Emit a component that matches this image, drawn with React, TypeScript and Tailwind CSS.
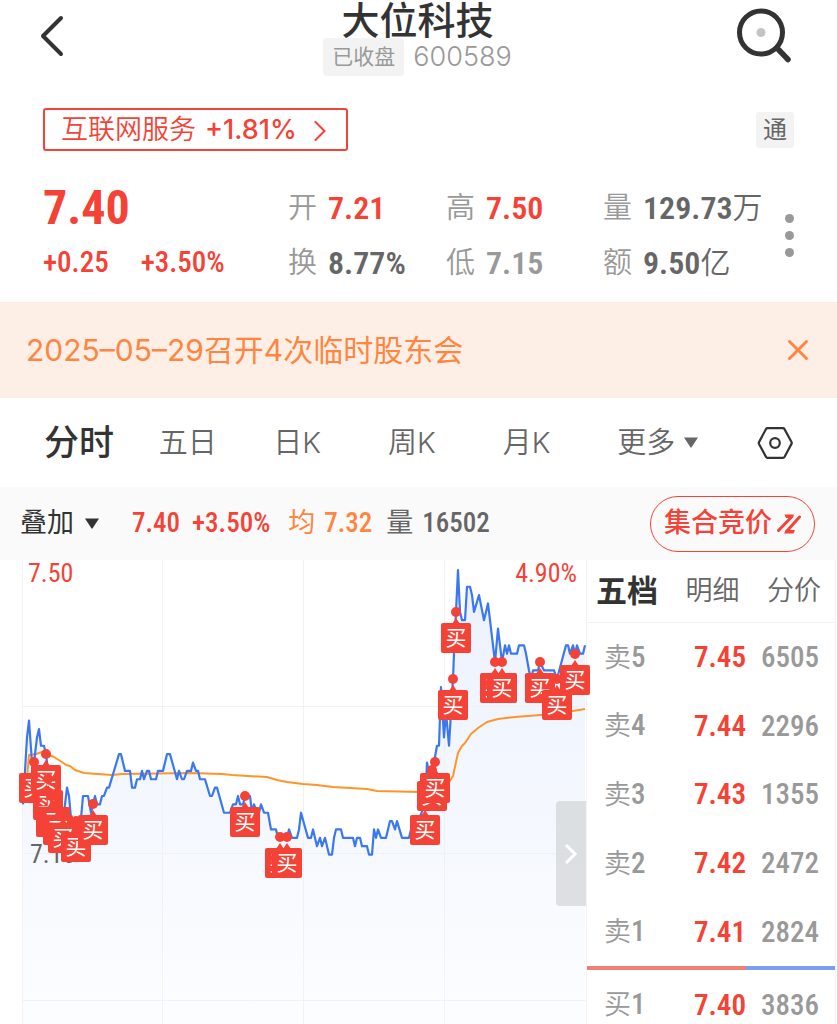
import type { ReactNode } from "react";

const RED = "#f44336";

const sans = "font-['Inter','Noto_Sans_CJK_SC',sans-serif]";
const num = "font-['Roboto_Condensed','Roboto','Noto_Sans_CJK_SC',sans-serif]";

// [x, ticks below the top of the scale], one tick is 0.01
const PRICE: [number, number][] = [
  [23, 28], [27, 20], [29, 18], [32, 23], [34, 23], [37, 20], [39, 19], [41, 21], [44, 21], [46, 22],
  [49, 25], [52, 28], [56, 29], [60, 31], [64, 29], [67, 26], [69, 27], [72, 31], [76, 32], [80, 31],
  [83, 27], [88, 27], [91, 29], [93, 28], [95, 27], [97, 28], [100, 28], [102, 27], [104, 27], [107, 26],
  [109, 26], [119, 22], [121, 22], [125, 24], [130, 24], [132, 26], [135, 26], [137, 25], [140, 25],
  [142, 24], [144, 25], [147, 24], [149, 24], [151, 25], [156, 25], [158, 24], [163, 24], [167, 22],
  [170, 22], [177, 25], [179, 24], [182, 25], [184, 25], [187, 24], [191, 24], [193, 23], [196, 24],
  [198, 24], [200, 25], [205, 25], [210, 27], [212, 27], [215, 26], [217, 26], [224, 29], [230, 29],
  [233, 28], [236, 28], [238, 27], [240, 28], [243, 28], [245, 27], [250, 27], [252, 29], [254, 28],
  [257, 29], [259, 29], [261, 28], [264, 29], [268, 29], [271, 31], [276, 31], [278, 32], [287, 32],
  [289, 31], [292, 32], [297, 32], [299, 31], [301, 29], [308, 32], [311, 32], [313, 31], [317, 33],
  [320, 32], [322, 33], [325, 32], [329, 34], [332, 34], [334, 32], [336, 31], [341, 31], [343, 32],
  [353, 32], [355, 33], [357, 32], [360, 32], [362, 33], [367, 33], [369, 34], [372, 34], [374, 31],
  [376, 32], [378, 31], [381, 32], [386, 32], [390, 30], [392, 30], [395, 31], [397, 30], [402, 32],
  [409, 32], [411, 31], [418, 30], [425, 28], [427, 23], [430, 25], [432, 24], [434, 23], [437, 21],
  [439, 21], [441, 14], [444, 20], [446, 17], [449, 21], [451, 17], [453, 13], [454, 10], [456, 5],
  [458, 0], [460, 5], [462, 6], [465, 6], [467, 2], [470, 2], [472, 3], [474, 5], [479, 3], [484, 6],
  [488, 4], [490, 6], [495, 11], [498, 7], [502, 11], [505, 9], [507, 10], [509, 9], [511, 10],
  [517, 10], [519, 9], [524, 9], [526, 10], [529, 12], [531, 13], [533, 12], [538, 12], [540, 11],
  [544, 12], [554, 12], [557, 13], [566, 9], [568, 9], [570, 10], [573, 9], [575, 10], [577, 9],
  [580, 10], [583, 10], [585, 9],
];

const AVERAGE: [number, number][] = [
  [27, 218], [29, 195], [36, 194], [42, 192], [46, 194], [49, 195], [54, 197], [62, 202], [66, 205],
  [70, 206], [75, 210], [84, 213], [98, 214], [112, 215], [122, 214], [190, 213], [222, 214], [232, 215],
  [248, 216], [267, 217], [277, 220], [287, 222], [303, 224], [317, 225], [333, 227], [350, 228],
  [367, 229], [377, 231], [420, 232], [440, 230], [450, 221], [453, 216], [456, 202], [458, 193],
  [462, 186], [465, 183], [471, 174], [478, 168], [487, 162], [498, 159], [515, 157], [528, 156],
  [540, 155], [557, 154], [573, 151], [585, 149],
];

const BUYS: [number, number][] = [
  [34, 202], [46, 194], [48, 219], [51, 236], [55, 236], [58, 244], [63, 252], [76, 261],
  [93, 244], [245, 236], [280, 277], [287, 277], [425, 244], [432, 210], [435, 202], [453, 119],
  [456, 52], [495, 102], [502, 102], [540, 102], [557, 119], [575, 94],
];

const priceY = (ticks: number) => 10 + ticks * 8.37;
const pricePath = PRICE.map(([x, t]) => `${x},${priceY(t)}`).join(" ");
const averagePath = AVERAGE.map(([x, y]) => `${x},${y}`).join(" ");

function Triangle({ className }: { className: string }) {
  return (
    <svg viewBox="0 0 16 11" className={`h-[11px] w-4 shrink-0 ${className}`} aria-hidden="true">
      <path d="M1 0.5h14L8.6 10.3a0.8 0.8 0 0 1-1.2 0z" fill="currentColor" />
    </svg>
  );
}

function Stat({ label, color, unit, children }: { label: string; color: string; unit?: string; children: ReactNode }) {
  return (
    <div className="flex items-center gap-[11px] whitespace-nowrap">
      <dt className="text-[29px] font-[350] text-[#999]">{label}</dt>
      <dd className={`flex items-center text-[32px] font-semibold ${num} ${color}`}>
        {children}
        {unit && <span className="text-[30px] font-[350]">{unit}</span>}
      </dd>
    </div>
  );
}

function Header() {
  return (
    <header className="flex items-start justify-between pl-[38px] pr-[44px]">
      <button aria-label="返回" className="mt-[14px] text-[#333]">
        <svg viewBox="0 0 28 44" className="h-11 w-7" fill="none" stroke="currentColor" strokeWidth="4" strokeLinecap="round" strokeLinejoin="round">
          <path d="M23 4 5 22l18 18" />
        </svg>
      </button>
      <div className="ml-8 flex flex-col items-center">
        <h1 className="text-[38px] font-medium leading-10 text-[#333]">大位科技</h1>
        <div className="-mt-0.5 flex items-center gap-[9px]">
          <span className="rounded bg-[#f3f3f3] px-[9px] text-[21px] leading-[38px] text-[#999]">已收盘</span>
          <span className="text-[27px] font-light leading-[38px] text-[#999]">600589</span>
        </div>
      </div>
      <button aria-label="搜索" className="mt-2 text-[#333]">
        <svg viewBox="0 0 56 56" className="size-14" fill="none" stroke="currentColor" strokeLinecap="round">
          <circle cx="24" cy="24.500" r="21.500" strokeWidth="5" />
          <path d="m40 40 11 11.500" strokeWidth="5.500" />
          <circle cx="24" cy="24.500" r="4.500" fill="#c4c4c4" stroke="none" />
        </svg>
      </button>
    </header>
  );
}

function Quote() {
  return (
    <section className="flex flex-col pl-[43px] pr-[43px]">
      <div className="mt-8 flex items-center justify-between">
        <a href="#sector" className="flex h-[43px] items-center gap-[9px] rounded-[3px] border-2 border-[#f44336] pl-4 pr-5 pt-0.5 text-[27px] text-[#f44336]">
          <span className="font-[350]">互联网服务</span>
          <span className="font-medium">+1.81%</span>
          <svg viewBox="0 0 12 20" className="ml-2 h-5 w-3" fill="none" stroke="currentColor" strokeWidth="2" strokeLinecap="round" aria-hidden="true">
            <path d="m1.500 1 9 9-9 9" />
          </svg>
        </a>
        <span className="rounded-[3px] bg-[#f3f3f3] px-[7px] text-2xl leading-9 text-[#666]">通</span>
      </div>

      <div className="mt-[29px] flex items-center text-[#f44336]">
        <div className={`w-[245px] ${num}`}>
          <p className="flex h-[55px] items-center text-[48px] font-bold">7.40</p>
          <p className="flex h-[55px] items-center gap-8 text-[29px] font-medium">
            <span>+0.25</span>
            <span>+3.50%</span>
          </p>
        </div>
        <dl className="grid flex-1 auto-rows-[55px] grid-cols-[158px_157px_1fr] items-center">
          <Stat label="开" color="text-[#f44336]">7.21</Stat>
          <Stat label="高" color="text-[#f44336]">7.50</Stat>
          <Stat label="量" color="text-[#666]" unit="万">129.73</Stat>
          <Stat label="换" color="text-[#666]">8.77%</Stat>
          <Stat label="低" color="text-[#999]">7.15</Stat>
          <Stat label="额" color="text-[#666]" unit="亿">9.50</Stat>
        </dl>
        <button aria-label="更多行情" className="flex flex-col gap-2">
          <i className="size-[9px] rounded-full bg-[#999]" />
          <i className="size-[9px] rounded-full bg-[#999]" />
          <i className="size-[9px] rounded-full bg-[#999]" />
        </button>
      </div>
    </section>
  );
}

function Notice() {
  return (
    <div className="mt-3 flex h-24 items-center justify-between bg-[#feefe6] pl-[26px] pr-[28px] text-[#ff8540]">
      <p className="text-[30px]">2025–05–29召开4次临时股东会</p>
      <button aria-label="关闭">
        <svg viewBox="0 0 22 22" className="size-[22px]" fill="none" stroke="currentColor" strokeWidth="3" strokeLinecap="round">
          <path d="m2.500 2.500 17 17m0-17-17 17" />
        </svg>
      </button>
    </div>
  );
}

function PeriodTabs() {
  return (
    <div className="flex h-[89px] items-center px-11 text-[#666]">
      <nav className="mr-[25px] grid flex-1 grid-cols-6 items-center text-[29px] font-[350]">
        <button className="text-left text-[35px] font-medium text-[#333]">分时</button>
        <button className="text-left">五日</button>
        <button className="text-left">日K</button>
        <button className="text-left">周K</button>
        <button className="text-left">月K</button>
        <button className="flex items-center gap-2 whitespace-nowrap">
          更多
          <Triangle className="text-[#666]" />
        </button>
      </nav>
      <button aria-label="设置" className="text-[#333]">
        <svg viewBox="0 0 36 32" className="h-8 w-9" fill="none" stroke="currentColor" strokeWidth="2.200" strokeLinejoin="round">
          <path d="M10.500 1.200h15.500q1 0 1.500 0.900l7 13q0.500 0.900 0 1.800l-7 13q-0.500 0.900-1.500 0.900H10.500q-1 0-1.500-0.900l-7-13q-0.500-0.900 0-1.800l7-13q0.500-0.900 1.500-0.900z" />
          <circle cx="18" cy="16" r="4.800" />
        </svg>
      </button>
    </div>
  );
}

function InfoBar() {
  return (
    <div className={`flex h-[73px] items-center whitespace-nowrap bg-[#fafafa] pl-5 pr-[22px] text-[27px] font-medium text-[#f44336] ${num}`}>
      <button className="flex items-center gap-[10px] font-normal text-[#333]">
        叠加
        <Triangle className="text-[#333]" />
      </button>
      <span className="ml-8">7.40</span>
      <span className="ml-3">+3.50%</span>
      <span className="ml-[18px] flex items-center gap-[9px] text-[#ff8540]">
        <span className="font-normal">均</span>7.32
      </span>
      <span className="ml-[14px] flex items-center gap-[9px] text-[#666]">
        <span className="font-normal">量</span>16502
      </span>
      <button className={`ml-auto flex h-14 items-center gap-[5px] rounded-full border border-[#f44336] px-[13px] font-medium ${sans}`}>
        集合竞价
        <svg viewBox="0 0 24 20" className="h-5 w-6" aria-hidden="true">
          <path d="M7.500 0.500h9.500l-2 3.500H9zM7 19.500h9.500l1.500-3.500H9z" fill={RED} />
          <path d="M1.500 16.500 15 2.500M9.500 17.500 22.500 3" fill="none" stroke={RED} strokeWidth="3" strokeLinecap="round" />
        </svg>
      </button>
    </div>
  );
}

function Chart() {
  return (
    <div className="relative z-10 min-w-0 flex-1">
      <svg viewBox="0 0 586 464" className="block w-full overflow-visible" role="img" aria-label="分时走势">
        <defs>
          <linearGradient id="area" x1="0" y1="0" x2="0" y2="1">
            <stop offset="0" stopColor="#3b78f0" stopOpacity="0.100" />
            <stop offset="1" stopColor="#3b78f0" stopOpacity="0.015" />
          </linearGradient>
        </defs>
        <polygon points={`23,464 ${pricePath} 585,464`} fill="url(#area)" />
        <path d="M22.500 0v464M162.500 0v464M303.500 0v464M444.500 0v464M22 146.500h564M22 293.500h564M22 440.500h564" stroke="#eeeff3" strokeOpacity="0.800" fill="none" />
        <polyline points={averagePath} fill="none" stroke="#ff9528" strokeWidth="2" strokeLinejoin="round" />
        <polyline points={pricePath} fill="none" stroke="#3b78f0" strokeWidth="2.200" strokeLinejoin="round" />
        <g className={num} fontSize="26">
          <text x="28" y="22" fill={RED}>7.50</text>
          <text x="577" y="22" fill={RED} textAnchor="end">4.90%</text>
          <text x="30" y="303" fill="#666">7.15</text>
        </g>
        {BUYS.map(([x, y], i) => (
          <g key={i}>
            <circle cx={x} cy={y} r="5" fill={RED} />
            <path d={`M${x} ${y + 6}l4 6h-8z`} fill={RED} />
            <rect x={x - 15} y={y + 11} width="30" height="30" rx="2" fill={RED} />
            <text x={x} y={y + 33} textAnchor="middle" fontSize="21" fill="#fff">买</text>
          </g>
        ))}
      </svg>
      {/* collapse handle over the chart's right edge */}
      <button aria-label="收起盘口" className="absolute right-0 top-[241px] flex h-[105px] w-[30px] items-center justify-center rounded-l bg-[#d6d8db]/80 text-white">
        <svg viewBox="0 0 14 22" className="h-[22px] w-[14px]" fill="none" stroke="currentColor" strokeWidth="3">
          <path d="m2 2 9 9-9 9" />
        </svg>
      </button>
    </div>
  );
}

type Level = [string, string, string, string];

const SELLS: Level[] = [
  ["卖", "5", "7.45", "6505"],
  ["卖", "4", "7.44", "2296"],
  ["卖", "3", "7.43", "1355"],
  ["卖", "2", "7.42", "2472"],
  ["卖", "1", "7.41", "2824"],
];

const BIDS: Level[] = [["买", "1", "7.40", "3836"]];

function Levels({ rows, className }: { rows: Level[]; className: string }) {
  return (
    <table className={`w-full table-fixed text-[29px] leading-9 text-[#999] ${num} ${className}`}>
      <tbody>
        {rows.map(([side, level, price, volume]) => (
          <tr key={side + level}>
            <th className="w-[70px] p-0 pl-[17px] text-left font-medium">
              <span className="text-[27px] font-[350]">{side}</span>
              {level}
            </th>
            <td className="p-0 text-right font-semibold text-[#f44336]">{price}</td>
            <td className="w-[89px] p-0 pr-4 text-right font-medium">{volume}</td>
          </tr>
        ))}
      </tbody>
    </table>
  );
}

function OrderBook() {
  return (
    <aside className="mr-px w-[250px] shrink-0 border-x border-[#f3f3f3]">
      <div className="flex h-[63px] items-center justify-between border-b border-[#f3f3f3] pl-[9px] pr-[14px] text-[27px] font-[350] text-[#666]">
        <button className="text-[31px] font-bold text-[#333]">五档</button>
        <button>明细</button>
        <button>分价</button>
      </div>
      <Levels rows={SELLS} className="h-[343px]" />
      <div className="flex h-1">
        <span className="flex-[64] bg-[#f08078]" />
        <span className="flex-[36] bg-[#7b9ff0]" />
      </div>
      <Levels rows={BIDS} className="mt-4" />
    </aside>
  );
}

export default function App() {
  return (
    <main className={`flex min-h-screen flex-col bg-white ${sans}`}>
      <Header />
      <Quote />
      <Notice />
      <PeriodTabs />
      <InfoBar />
      <div className="flex">
        <Chart />
        <OrderBook />
      </div>
    </main>
  );
}
